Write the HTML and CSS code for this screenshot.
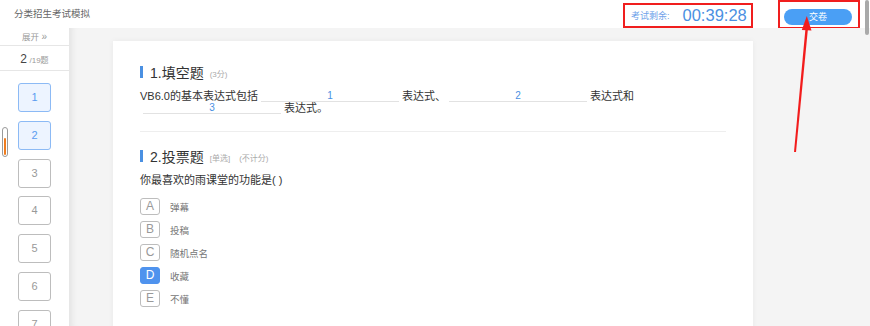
FILE: index.html
```html
<!DOCTYPE html>
<html lang="zh-CN">
<head>
  <meta charset="UTF-8">
  <title>分类招生考试模拟</title>
  <link rel="stylesheet" href="styles.css">
</head>
<body>

  <!-- top bar -->
  <div class="header">
    <div class="page-title">分类招生考试模拟</div>
    <div class="timer mark-box">
      <span class="timer-label">考试剩余:</span>
      <span class="timer-value">00:39:28</span>
    </div>
    <div class="submit-wrap mark-box">
      <button class="submit-btn">交卷</button>
    </div>
  </div>

  <div class="layout">
    <!-- question nav -->
    <div class="sidebar">
      <div class="expand">展开 <span class="chev">&raquo;</span></div>
      <div class="counter"><span class="cur">2</span> <span class="total">/19题</span></div>
      <div class="nav-list">
        <div class="nav-item done">1</div>
        <div class="nav-item done">2</div>
        <div class="nav-item">3</div>
        <div class="nav-item">4</div>
        <div class="nav-item">5</div>
        <div class="nav-item">6</div>
        <div class="nav-item">7</div>
      </div>
      <div class="mini-scroll"><div class="mini-fill"></div></div>
    </div>

    <!-- paper -->
    <div class="main">
      <div class="card">
        <div class="q-title"><span class="q-bar"></span>1.填空题<span class="q-tag">(3分)</span></div>
        <p class="fill-text">VB6.0的基本表达式包括<span class="blank">1</span>表达式、<span class="blank">2</span>表达式和<span class="blank">3</span>表达式。</p>

        <div class="divider"></div>

        <div class="q-title"><span class="q-bar"></span>2.投票题<span class="q-tag">[单选]</span><span class="q-tag wide">(不计分)</span></div>
        <p class="q-text">你最喜欢的雨课堂的功能是( )</p>
        <div class="options">
          <div class="option"><span class="opt-key">A</span><span class="opt-label">弹幕</span></div>
          <div class="option"><span class="opt-key">B</span><span class="opt-label">投稿</span></div>
          <div class="option"><span class="opt-key">C</span><span class="opt-label">随机点名</span></div>
          <div class="option"><span class="opt-key picked">D</span><span class="opt-label">收藏</span></div>
          <div class="option"><span class="opt-key">E</span><span class="opt-label">不懂</span></div>
        </div>
      </div>
    </div>
  </div>

  <div class="scroll-thumb"></div>

  <!-- annotation arrow -->
  <svg class="arrow" width="870" height="326">
    <polygon points="794,152 796,152 808,28 805.5,28" fill="#f21c1c"/>
    <polygon points="806.8,16 801.8,30 811.5,30.5" fill="#f21c1c"/>
  </svg>

</body>
</html>
```

FILE: styles.css
```css
* {
  box-sizing: border-box;
}

body {
  margin: 0;
  width: 870px;
  height: 326px;
  overflow: hidden;
  position: relative;
  font-family: "Liberation Sans", "Noto Sans CJK SC", sans-serif;
  background: #fff;
  color: #333;
}

/* header */
.header {
  height: 28px;
  display: flex;
  align-items: flex-start;
  padding: 0 10px 0 14px;
  background: #fff;
}

.page-title {
  font-size: 9.5px;
  color: #666;
  line-height: 28px;
}

.mark-box {
  border: 2px solid #f01e1e;
}

.timer {
  margin-left: auto;
  margin-top: 3px;
  width: 130px;
  height: 25px;
  display: flex;
  align-items: center;
  padding-left: 6px;
}

.timer-label {
  font-size: 9px;
  color: #6fa2ea;
}

.timer-value {
  margin-left: 13px;
  font-size: 16.5px;
  color: #4a90e2;
}

.submit-wrap {
  margin-left: 25px;
  width: 82px;
  height: 29px;
  padding: 4px 0 0 4px;
}

.submit-btn {
  width: 68px;
  height: 16px;
  border: none;
  border-radius: 8px;
  background: #4a9ff5;
  color: #fff;
  font-family: inherit;
  font-size: 9px;
  font-weight: normal;
  padding: 0;
}

/* body */
.layout {
  display: flex;
  height: 298px;
}

.sidebar {
  width: 69px;
  background: #fff;
  position: relative;
  text-align: center;
}

.expand {
  height: 18px;
  line-height: 17px;
  font-size: 8.5px;
  color: #999;
  border-bottom: 1px solid #e6e6e6;
}

.chev {
  font-size: 10px;
}

.counter {
  height: 25px;
  line-height: 24px;
  border-bottom: 1px solid #e6e6e6;
}

.counter .cur {
  font-size: 12px;
  color: #444;
}

.counter .total {
  font-size: 8px;
  color: #999;
  margin-left: -2px;
}

.nav-list {
  display: flex;
  flex-direction: column;
  align-items: center;
  gap: 8.75px;
  padding-top: 12px;
}

.nav-item {
  flex-shrink: 0;
  width: 33px;
  height: 29px;
  border: 1px solid #bdbdbd;
  border-radius: 3px;
  font-size: 11px;
  line-height: 27px;
  color: #999;
}

.nav-item.done {
  background: #edf4ff;
  border-color: #8cbaf5;
  color: #5b9cf0;
}

.mini-scroll {
  position: absolute;
  left: 2px;
  top: 99px;
  width: 6px;
  height: 30px;
  border: 1px solid #9a9a9a;
  border-radius: 3px;
  display: flex;
  align-items: flex-end;
  padding: 1px;
}

.mini-fill {
  width: 100%;
  height: 17px;
  background: #ef7d1f;
  border-radius: 1px;
}

.main {
  flex: 1;
  background: #f4f4f4;
  box-shadow: inset 8px 0 6px -5px rgba(0, 0, 0, 0.07);
  padding: 13px 0 0 44px;
}

.card {
  width: 640px;
  height: 300px;
  background: #fff;
  padding: 0 27px;
  box-shadow: 0 0 6px rgba(0, 0, 0, 0.05);
  overflow: hidden;
}

.q-title {
  display: flex;
  align-items: center;
  height: 16px;
  margin-top: 23px;
  font-size: 14px;
  color: #333;
}

.q-bar {
  width: 3px;
  height: 12px;
  background: #4a90e2;
  margin-right: 7px;
}

.q-tag {
  font-size: 8px;
  color: #aaa;
  margin-left: 6px;
  margin-top: 2px;
}

.q-tag.wide {
  margin-left: 9px;
}

.fill-text {
  margin: 10px 0 0;
  font-size: 11px;
  line-height: 12px;
  color: #333;
}

.blank {
  display: inline-block;
  vertical-align: top;
  width: 138px;
  height: 12px;
  margin: 0 3px;
  line-height: 12px;
  border-bottom: 1px solid #e2e2e2;
  text-align: center;
  color: #4a90e2;
  font-size: 10px;
}

.divider {
  margin-top: 17px;
  border-top: 1px solid #eeeeee;
}

.divider + .q-title {
  margin-top: 16px;
}

.q-text {
  margin: 9px 0 0;
  font-size: 11px;
  line-height: 14px;
  color: #333;
}

.options {
  margin-top: 11px;
  display: flex;
  flex-direction: column;
  gap: 6px;
}

.option {
  display: flex;
  align-items: center;
  height: 17px;
}

.opt-key {
  width: 20px;
  height: 17px;
  border: 1px solid #bdbdbd;
  border-radius: 3px;
  text-align: center;
  line-height: 15px;
  font-size: 12px;
  color: #999;
}

.opt-key.picked {
  background: #4f93ee;
  border-color: #4f93ee;
  color: #fff;
}

.opt-label {
  margin-left: 10px;
  font-size: 9.5px;
  color: #777;
}

.scroll-thumb {
  position: absolute;
  top: 0;
  right: 1px;
  width: 4px;
  height: 35px;
  background: #a9a9a9;
  border-radius: 2px;
}

.arrow {
  position: absolute;
  top: 0;
  left: 0;
  pointer-events: none;
}
```
